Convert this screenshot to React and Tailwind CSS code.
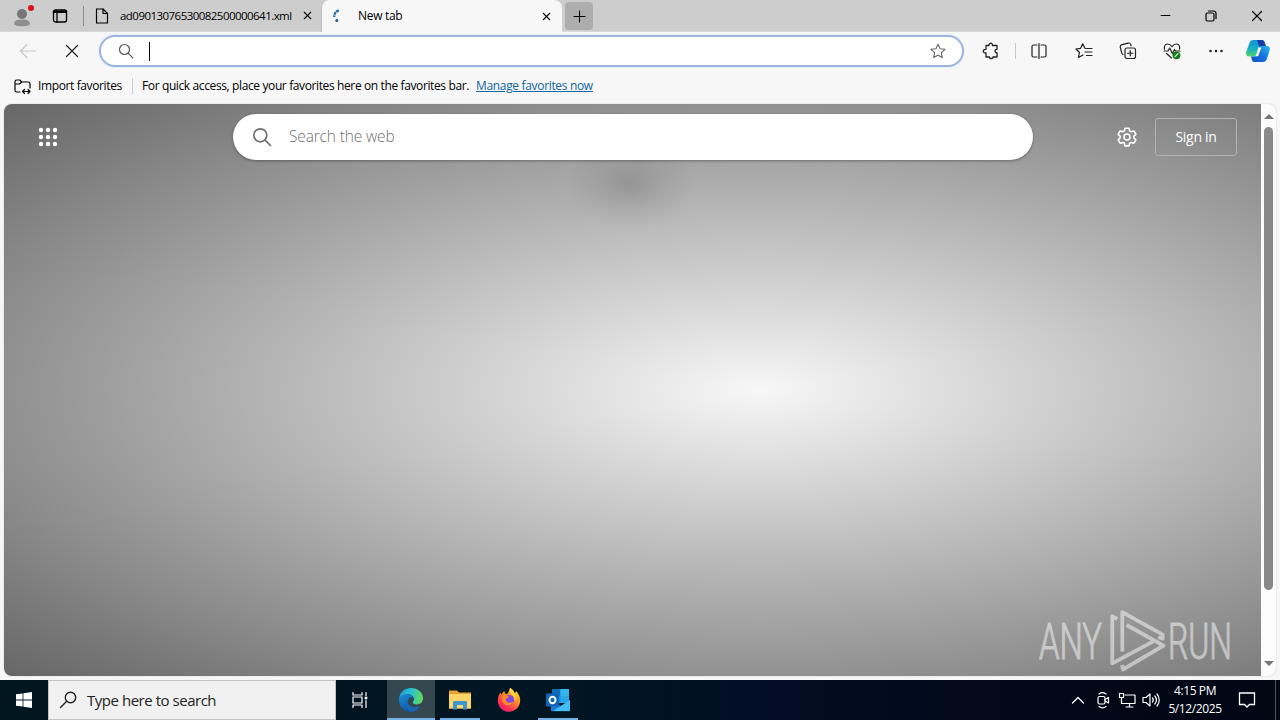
import { X, Minus, Plus } from 'lucide-react';

const UI_FONT = "font-['Open_Sans','Noto_Sans',sans-serif]";

const Icon = ({ size = 20, sw = 1.2, className = '', children }) => (
  <svg
    width={size}
    height={size}
    viewBox={`0 0 ${size} ${size}`}
    fill="none"
    stroke="currentColor"
    strokeWidth={sw}
    strokeLinecap="round"
    strokeLinejoin="round"
    className={`shrink-0 ${className}`}
  >
    {children}
  </svg>
);

const STAR = 'M8 1.2l2.1 4.5 4.9.6-3.6 3.4.9 4.9L8 12.2l-4.3 2.4.9-4.9L1 6.3l4.9-.6z';

const TabStrip = () => (
  <header className="h-8 bg-[#cdcdcd] flex items-stretch border-b border-[#d9d9d9] text-black">
    <div className="w-11 flex items-center justify-center">
      <svg width="24" height="26" viewBox="0 0 24 26" className="mt-px">
        <circle cx="12" cy="11" r="5" fill="#777" />
        <path d="M4 21c0-3.200 3-4.500 8-4.500s8 1.300 8 4.500c-1 3-15 3-16 0z" fill="#8e8e8e" />
        <circle cx="21" cy="5" r="3" fill="#e0101c" />
      </svg>
    </div>
    <div className="w-8 flex items-center justify-center">
      <Icon size={16} sw={1.3}>
        <rect x="1.5" y="2" width="13" height="12" rx="2" />
        <path d="M2 3.800h12" strokeWidth="2.600" />
        <path d="M5 5v9" />
      </Icon>
    </div>
    <div className="w-px h-5 mt-1.5 ml-[7px] bg-[#8c8c8c]" />
    <div className="w-[236px] flex items-center pl-2.5">
      <Icon size={16} sw={1.2}>
        <path d="M2.500 1h6.500l4.500 4.500v9.500h-11z" />
        <path d="M9 1v4.500h4.500" />
      </Icon>
      <span className="ml-2.5 w-[175px] shrink-0 text-[11.5px] leading-4 tracking-[-0.54px] whitespace-nowrap">
        ad09013076530082500000641.xml
      </span>
      <X size={13} strokeWidth={2} className="ml-1.5 shrink-0" />
    </div>
    <div className="w-[241px] h-8 bg-[#f7f7f7] rounded-t-lg flex items-center pl-2 ml-px border-l border-[#bdbdbd]">
      <svg width="16" height="16" viewBox="0 0 16 16" fill="none">
        <path d="M8.800 2.300C5.800 3.500 4 5.500 4.300 9" stroke="#1f6fa5" strokeWidth="2.400" strokeDasharray="3 0.6" />
        <circle cx="6.800" cy="12.500" r="1.500" fill="#1c5d8c" />
      </svg>
      <span className="ml-3 flex-1 text-[12px] leading-4 tracking-[-0.3px]">New tab</span>
      <X size={13} strokeWidth={2} className="mr-[9px]" />
    </div>
    <div className="ml-[3px] mt-0.5 w-[28px] h-7 rounded bg-[#adadad] flex items-center justify-center">
      <Plus size={19} strokeWidth={1.3} />
    </div>
    <div className="ml-auto flex items-center">
      <div className="w-[46px] flex justify-center">
        <Minus size={15} strokeWidth={1.6} />
      </div>
      <div className="w-[46px] flex justify-center">
        <Icon size={12} sw={1.2}>
          <rect x="1" y="3" width="8" height="8" rx="1.500" />
          <path d="M3.500 1h5a2.500 2.500 0 0 1 2.500 2.500v5" />
        </Icon>
      </div>
      <div className="w-[46px] flex justify-center">
        <Icon size={12} sw={1.2}>
          <path d="M1.500 1.500l9 9M10.500 1.500l-9 9" />
        </Icon>
      </div>
    </div>
  </header>
);

const CopilotLogo = () => (
  <svg width="26" height="24" viewBox="0 0 26 24" className="shrink-0">
    <defs>
      <linearGradient id="cpA" x1="0" y1="0" x2="0" y2="1">
        <stop offset="0" stopColor="#1592dc" />
        <stop offset="0.55" stopColor="#18b2bf" />
        <stop offset="1" stopColor="#55d46a" />
      </linearGradient>
      <linearGradient id="cpB" x1="1" y1="0" x2="0" y2="1">
        <stop offset="0" stopColor="#28b8ee" />
        <stop offset="0.5" stopColor="#1673dd" />
        <stop offset="1" stopColor="#164fc4" />
      </linearGradient>
    </defs>
    <path d="M12 1h5c1.500 0 2.200 1 2.600 2.300L20.800 7h-4.300c-2 0-2.800 1-3.400 3l-1.600 5c-.6 2-1.500 2.500-3 2.500H4c-2.500 0-3.500-2-2.800-4.500L4.300 4.300C5 2 6.200 1 8.300 1z" fill="url(#cpA)" />
    <path d="M12 1h5c1.500 0 2.200 1 2.600 2.300L20.800 7h-4.300c-1 0-1.800.3-2.300.9z" fill="#153fa5" />
    <path d="M14 23H9.500c-1.600 0-2.200-1-2.600-2.300l-.9-3.200h3c1.600 0 2.500-.9 3-2.500l2-6c.5-1.500 1.300-2 2.600-2h5.100c2.700 0 3.600 2 2.900 4.500l-2.700 8.200c-.7 2.300-2 3.300-4.200 3.300z" fill="url(#cpB)" />
    <path d="M13.500 8.500h2.800l-3.200 8.700h-3.300c1.200-.5 1.700-1.100 2.200-2.400z" fill="#f5fbff" />
  </svg>
);

const ToolSlot = ({ children }) => (
  <div className="w-11 flex items-center justify-center shrink-0">{children}</div>
);

const Toolbar = () => (
  <div className="h-[38px] flex items-center text-[#222]">
    <div className="w-[55px] flex justify-center text-[#c9c9c9]">
      <Icon size={18}>
        <path d="M16.500 9h-15M8 2.500L1.500 9 8 15.500" />
      </Icon>
    </div>
    <div className="w-[34px] flex justify-center">
      <Icon size={14}>
        <path d="M1.500 1.500l11 11M12.500 1.500l-11 11" />
      </Icon>
    </div>
    <div className="ml-2.5 w-[865px] h-8 rounded-full border-2 border-[#9db5dc] ring-1 ring-[#e4effb] bg-white flex items-center pl-[17px] pr-4">
      <Icon size={16} className="text-[#555]">
        <circle cx="6.500" cy="6.500" r="5" />
        <path d="M10.300 10.300l4.500 4.500" />
      </Icon>
      <div className="ml-[15px] w-px h-[19px] bg-black" />
      <Icon size={16} sw={1.1} className="ml-auto text-[#666]">
        <path d={STAR} />
      </Icon>
    </div>
    <div className="ml-1 w-[46px] flex justify-center">
      <Icon size={18} sw={1.3}>
        <path d="M4 3.500h3c-.3-3 3.800-3 3.500 0h4.500v3.800c-2.600-.2-2.600 3.600 0 3.400v4.300h-4c.2 2-3.800 2-3.600 0H4v-4c-3.600.3-3.600-4 0-3.700z" />
      </Icon>
    </div>
    <div className="w-px h-4 mx-px bg-[#c8c8c8]" />
    <ToolSlot>
      <Icon size={18} sw={1.2}>
        <path d="M7 3H3.500A1.500 1.500 0 0 0 2 4.500v9A1.500 1.500 0 0 0 3.500 15H7M11 3h3.500A1.500 1.500 0 0 1 16 4.500v9a1.500 1.500 0 0 1-1.500 1.500H11M9 1.500v15" />
      </Icon>
    </ToolSlot>
    <ToolSlot>
      <Icon size={18} sw={1.2} className="ml-px">
        <path d="M10 6.300L7.700 1.800 5.600 6.300l-4.700.7 3.500 3.300-.9 5.200L8 13" />
        <path d="M10.500 6.500h6.500M10 10h7M11.500 13.500H17" />
      </Icon>
    </ToolSlot>
    <ToolSlot>
      <Icon size={18} sw={1.200} className="ml-0.5">
        <rect x="6" y="6" width="10.500" height="10.500" rx="2" />
        <path d="M11.250 8.500v5.500M8.500 11.250H14" />
        <path d="M4 12.500C3 12 2.800 11.500 2.600 10.500L1.300 5.300C1 4 1.700 3 3 2.600l6-1.500c1.300-.3 2.300.3 2.700 1.400l.4 1.200" />
      </Icon>
    </ToolSlot>
    <ToolSlot>
      <Icon size={18} sw={1.2} className="ml-0.5">
        <path d="M1.500 7.200C.6 3.600 2.700 2 4.700 2 6.700 2 8.300 3.600 9 4.700 9.700 3.600 11.300 2 13.300 2c2 0 4.100 1.600 3.200 5.200" />
        <path d="M1 9h4l1.700-3 2.700 5.500L11.500 7.500l1 1.500H17M3.500 11.500L8.500 16" />
        <circle cx="13.500" cy="13.300" r="3.900" fill="#15791a" stroke="none" />
        <path d="M12 14.700l3-3" stroke="#d8f0d8" />
      </Icon>
    </ToolSlot>
    <ToolSlot>
      <Icon size={16} className="ml-0.5">
        <g fill="currentColor" stroke="none">
          <circle cx="2.500" cy="8" r="1.300" />
          <circle cx="8" cy="8" r="1.300" />
          <circle cx="13.500" cy="8" r="1.300" />
        </g>
      </Icon>
    </ToolSlot>
    <div className="ml-2">
      <CopilotLogo />
    </div>
  </div>
);

const FavoritesBar = () => (
  <div className="h-[34px] flex items-center pl-3.5 pb-0.5 text-[12px] leading-4 text-black whitespace-nowrap">
    <Icon size={17} sw={1.2}>
      <path d="M6 14H2.800A1.800 1.800 0 0 1 1 12.200V3.500C1 2.500 1.800 2 2.800 2h3l2 2h6.400A1.800 1.800 0 0 1 16 5.800V10M1 6h4.500l2.300-2" />
      <path d="M8.500 13.500h7.500M10.500 11.500l-2 2 2 2M14 11.500l2 2-2 2" />
    </Icon>
    <span className="ml-[7px] w-[84px] tracking-[-0.38px]">Import favorites</span>
    <div className="w-px h-4 ml-[10px] bg-[#d0d0d0]" />
    <span className="ml-[9px] w-[334px] tracking-[-0.38px]">
      For quick access, place your favorites here on the favorites bar.
    </span>
    <span className="text-[#0f659f] underline underline-offset-1 tracking-[-0.33px]">Manage favorites now</span>
  </div>
);

const DOTS = [3, 10, 17];

// ANY.RUN mark: interlocked play triangles between the words
const Watermark = () => (
  <svg width="198" height="66" viewBox="0 0 198 66" className="opacity-50">
    <g
      fill="#fff"
      stroke="#fff"
      strokeWidth="1"
      className="font-['Roboto',sans-serif] font-light"
      fontSize="50"
    >
      <text x="3" y="51" textLength="63" lengthAdjust="spacingAndGlyphs">ANY</text>
      <text x="132" y="51" textLength="64" lengthAdjust="spacingAndGlyphs">RUN</text>
    </g>
    <g fill="none" stroke="#fff" strokeWidth="3.800" strokeLinejoin="round">
      <path d="M81.300 11L76.300 8.300v47l41-22" />
      <path d="M86.300 43.500V4.200l40.400 22.500v4l-4.500-1.500" />
      <path d="M90.700 17L127.500 37.700 87 61.500l-1-4.500" />
    </g>
  </svg>
);

const NewTabPage = () => (
  <main className="flex-1 mx-1 mb-1 flex rounded-lg overflow-hidden bg-[#fcfcfc] shadow-[0_0_2px_#ccc]">
    <div className="w-[1257px] flex flex-col bg-[radial-gradient(ellipse_64px_46px_at_626px_80px,rgba(100,100,100,0.3),rgba(110,110,110,0.12)_55%,transparent),radial-gradient(ellipse_at_60%_50%,#f7f7f7,#666)]">
      <div className="h-[66px] shrink-0 flex items-center">
        <svg width="20" height="20" viewBox="0 0 20 20" fill="#fff" className="ml-[34px]">
          {DOTS.map((y) => DOTS.map((x) => <circle key={`${x}-${y}`} cx={x} cy={y} r="2.200" />))}
        </svg>
        <div className="ml-[175px] w-[800px] h-[46px] rounded-full bg-white shadow-[0_1px_3px_rgba(0,0,0,0.35)] flex items-center pl-[19px] text-[#707070]">
          <Icon size={20} sw={1.700}>
            <circle cx="8.300" cy="8.300" r="6.500" />
            <path d="M13.200 13.200l5.300 5.300" />
          </Icon>
          <span className="ml-[17px] text-[15.5px] font-light tracking-[-0.15px]">Search the web</span>
        </div>
        <Icon size={20} sw={1.600} className="ml-[84px] text-white">
          <circle cx="10" cy="10" r="3" />
          <path d="M8 1.200h4l.6 2.700 1.600.9 2.700-.9 2 3.400-2 1.900v1.700l2 1.900-2 3.400-2.700-.8-1.600.9-.6 2.600H8l-.6-2.600-1.600-.9-2.700.8-2-3.400 2-1.900V9.200l-2-1.900 2-3.400 2.700.9 1.600-.9z" />
        </Icon>
        <div className="ml-[18px] w-[82px] h-[38px] border border-[#b2b2b2] rounded-[3px] flex items-center justify-center pb-px text-[14px] tracking-[-0.3px] text-white">
          Sign in
        </div>
      </div>
      <div className="flex-1" />
      <div className="flex justify-end pr-[27px] pb-0.5">
        <Watermark />
      </div>
    </div>
    <div className="flex-1 flex flex-col items-center pt-2.5 pb-2.5">
      <div className="w-0 h-0 border-x-[5px] border-x-transparent border-b-[5px] border-b-[#777]" />
      <div className="mt-2 w-[9px] h-[463px] rounded-full bg-[#898989]" />
      <div className="mt-auto w-0 h-0 border-x-[5px] border-x-transparent border-t-[5px] border-t-[#777]" />
    </div>
  </main>
);

const EdgeLogo = () => (
  <svg width="26" height="26" viewBox="0 0 26 26">
    <defs>
      <linearGradient id="edgeTop" x1="0" y1="0.3" x2="1" y2="0.4">
        <stop offset="0" stopColor="#1b9de0" />
        <stop offset="0.5" stopColor="#2bc3d2" />
        <stop offset="1" stopColor="#65d953" />
      </linearGradient>
      <linearGradient id="edgeLow" x1="0" y1="0" x2="0.6" y2="1">
        <stop offset="0" stopColor="#1a8fdc" />
        <stop offset="1" stopColor="#0d4f9c" />
      </linearGradient>
    </defs>
    <path d="M1 12C1.500 5.500 6.500 1 13 1c7 0 12 4.800 12 10.300 0 3.900-3 6.200-6.300 6.200-2.500 0-4-.9-4-1.900 0-.7 1.300-1.400 1.300-3.300 0-2.700-2.700-5-6.300-5C5.500 7.300 2.500 9 1 12z" fill="url(#edgeTop)" />
    <path d="M1 12c1.500-3.300 4.800-4.700 8.700-4.700 3.300 0 5.300 1.700 6 3.500-3.300-1.800-6.200.7-6.200 4.200 0 4.500 5.500 8 11.500 5C19 23.300 16 25 12.800 25 6 25 .5 19.500 1 12z" fill="url(#edgeLow)" />
    <path d="M10.500 11.500c-4 3.500-2.500 10.500 3 13.200 3.200 0 6-1.700 7.900-4.500.3-.5 0-.8-.5-.6-6 2.400-11.400-1.600-11.400-5.100z" fill="#1668b5" />
  </svg>
);

const FolderLogo = () => (
  <svg width="24" height="22" viewBox="0 0 24 22">
    <path d="M1 1.500h8l2 2h12v16H1z" fill="#e4a32c" />
    <path d="M1 5h22v14.500H1z" fill="#ffd667" />
    <path d="M5 20.500v-7c0-1 .7-1.500 1.500-1.500h11c.9 0 1.500.5 1.500 1.500v7h-4V16H9v4.500z" fill="#3e94d1" />
  </svg>
);

const FirefoxLogo = () => (
  <svg width="24" height="26" viewBox="0 0 24 26">
    <defs>
      <linearGradient id="fox" x1="0.9" y1="0" x2="0.2" y2="1">
        <stop offset="0" stopColor="#ffe344" />
        <stop offset="0.4" stopColor="#ff9420" />
        <stop offset="0.75" stopColor="#ff3750" />
        <stop offset="1" stopColor="#e3157c" />
      </linearGradient>
    </defs>
    <path d="M13 1c2.500 1.200 4 3.200 4.500 5 1-.2 1.500-1 1.500-2 3 3 4.200 6.300 4.200 9.300 0 6.500-5 11.500-11.200 11.500S.8 20 .8 13.700c0-4 1.500-6.700 2.700-8.200.2 1 .5 1.700 1 2C5.500 5.500 6.500 4.500 7.500 4c0 1.500.5 2.500 1.500 3 2.500.2 3-3.500 4-6z" fill="url(#fox)" />
    <circle cx="12" cy="13" r="5.300" fill="#8648df" />
    <path d="M5.500 9.500c2-1.600 4-1.500 6.500.2-1 1.600-3.200 1-3.200 3 0 2.700 4.600 4.500 8 1.800-1 4.500-9 5.500-11 .5-.8-2-.8-4-.3-5.500z" fill="#ff8a22" />
    <path d="M13 1c-1 4 .5 5.500 3 8 1.500 1.500 1.800 3.500 1.300 5.500 2.700-2.500 2.500-6 .2-8.500C17 4.200 15.500 2.200 13 1z" fill="#ffd43b" />
  </svg>
);

const OutlookLogo = () => (
  <svg width="26" height="24" viewBox="0 0 26 24">
    <rect x="7" y="1" width="17" height="14" rx="1" fill="#28a8ea" />
    <path d="M7 1h8.500v7H7z" fill="#0f6cbd" />
    <path d="M15.500 1H24v7h-8.500z" fill="#36b4f2" />
    <path d="M7 8h8.500v6H7z" fill="#1490df" />
    <path d="M6 12l10 6 9-6v10c0 .8-.5 1.300-1.300 1.300H7.300C6.500 23.300 6 22.800 6 22z" fill="#1a7fd0" />
    <path d="M25 12L8 23h15.700c.8 0 1.300-.5 1.300-1.300z" fill="#43bdf3" />
    <rect x="1" y="5.500" width="13" height="13" rx="1.200" fill="#0f65b8" />
    <ellipse cx="7.500" cy="12" rx="3" ry="3.300" fill="none" stroke="#fff" strokeWidth="1.900" />
  </svg>
);

const apps = [
  { id: 'edge', Logo: EdgeLogo, cell: 'w-12 bg-[#35474f]', bar: 'w-12 bg-[#76b0e8]' },
  { id: 'explorer', Logo: FolderLogo, cell: 'w-[50px]', bar: 'w-10 bg-[#76b0e8]' },
  { id: 'firefox', Logo: FirefoxLogo, cell: 'w-12', bar: 'w-0' },
  { id: 'outlook', Logo: OutlookLogo, cell: 'w-[50px]', bar: 'w-10 bg-[#76b0e8]' },
];

const Taskbar = () => (
  <footer className="h-10 flex bg-[linear-gradient(90deg,#01161f,#011523_45%,#020d24_60%,#020818_80%,#020714)] text-white">
    <div className="w-12 flex items-center justify-center">
      <svg width="16" height="16" viewBox="0 0 16 16" fill="#fff">
        <path d="M0 2.300L6.600 1.400v6.200H0zM7.400 1.300L16 0v7.600H7.400zM0 8.400h6.600v6.200L0 13.700zM7.400 8.400H16V16l-8.600-1.300z" />
      </svg>
    </div>
    <div className="w-[288px] bg-[#f1f1f1] border border-[#c3c3c3] flex items-center pl-2.5 text-[#222]">
      <Icon size={18} sw={1.400}>
        <circle cx="11.500" cy="6.500" r="5.200" />
        <path d="M7.700 10.300L1.500 16.500" />
      </Icon>
      <span className="ml-2.5 text-[15px] tracking-[-0.47px]">Type here to search</span>
    </div>
    <div className="w-[51px] flex items-center justify-center pr-1">
      <Icon size={18} sw={1.200}>
        <path d="M2 1.500v2.500h9V1.500M2 16.500V14h9v2.500M2 6h9v6H2zM15 1.500v3M15 9.500v7" />
        <path d="M15 5.700v2.600" strokeWidth="2.600" strokeLinecap="butt" />
      </Icon>
    </div>
    {apps.map(({ id, Logo, cell, bar }) => (
      <div key={id} className={`${cell} flex flex-col items-center`}>
        <div className="h-[38px] pt-0.5 flex items-center">
          <Logo />
        </div>
        <div className={`h-0.5 ${bar}`} />
      </div>
    ))}
    <div className="ml-auto flex items-center">
      <Icon size={14} sw={1.300}>
        <path d="M1.500 10L7 4.500l5.500 5.500" />
      </Icon>
      <Icon size={18} sw={1.200} className="ml-[9px]">
        <rect x="4" y="5.500" width="7" height="7.500" rx="1.500" />
        <path d="M11 8.500l3.500-2v5.500l-3.500-2M5 3c2-1.500 5-1.500 7 0M5 15.500c2 1.500 5 1.500 7 0" />
      </Icon>
      <Icon size={18} sw={1.200} className="ml-1.5">
        <path d="M7 4h10v8.500H6M8 16h7M11.500 13v3M1.500 2.500h4v4h-4zM3.500 6.500v6H6" />
      </Icon>
      <Icon size={18} sw={1.200} className="ml-1.5">
        <path d="M1 6.500h3L8 3v12l-4-3.500H1zM10.500 7c1 1.200 1 2.800 0 4M12.800 5c2 2.400 2 5.600 0 8M15 3c3 3.500 3 8.500 0 12" />
      </Icon>
      <div className="ml-1.5 w-[58px] text-center text-[12px] leading-[18px] tracking-[-0.4px] whitespace-nowrap">
        <div>4:15 PM</div>
        <div>5/12/2025</div>
      </div>
      <Icon size={18} sw={1.300} className="ml-[14px] mr-[19px]">
        <path d="M1.500 2h15v11.500h-5L9 16l-2.500-2.500h-5z" strokeLinejoin="miter" />
      </Icon>
      <div className="w-px h-10 bg-[#4b535f] mr-1" />
    </div>
  </footer>
);

const App = () => (
  <div className={`w-[1280px] h-[720px] flex flex-col overflow-hidden bg-[#f7f7f7] ${UI_FONT}`}>
    <TabStrip />
    <Toolbar />
    <FavoritesBar />
    <NewTabPage />
    <Taskbar />
  </div>
);

export default App;
